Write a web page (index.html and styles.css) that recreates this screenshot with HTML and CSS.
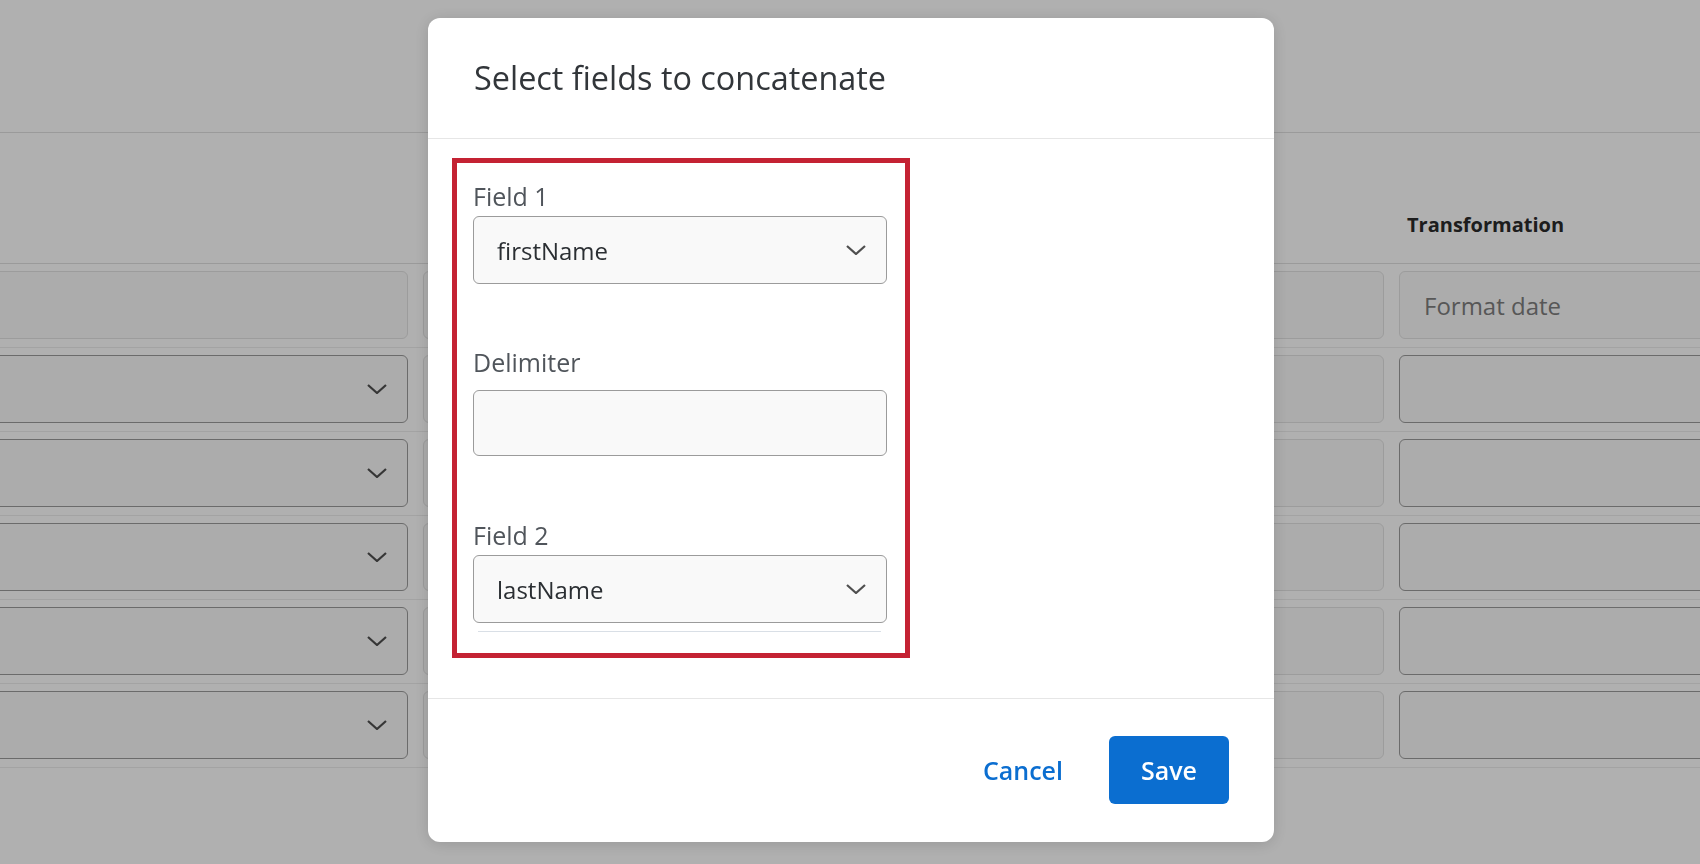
FILE: index.html
```html
<!DOCTYPE html>
<html lang="en">
<head>
    <meta charset="UTF-8">
    <meta name="viewport" content="width=device-width, initial-scale=1.0">
    <title>Select fields to concatenate</title>
    <link rel="stylesheet" href="styles.css">
</head>
<body>
    <div class="page">
        <div class="topbar"></div>

        <!-- mapping table behind the dialog -->
        <div class="table">
            <div class="row head-row">
                <div></div>
                <div></div>
                <div></div>
                <div class="col-title">Transformation</div>
            </div>
            <div class="row">
                <div class="box off"></div>
                <div class="box off"></div>
                <div class="box off"></div>
                <div class="box off"><span class="ph">Format date</span></div>
            </div>
            <div class="row">
                <div class="box pick"><svg class="chev" viewBox="0 0 20 10"><path d="M1 1 L10 9 L19 1"/></svg></div>
                <div class="box off"></div>
                <div class="box off"></div>
                <div class="box"></div>
            </div>
            <div class="row">
                <div class="box pick"><svg class="chev" viewBox="0 0 20 10"><path d="M1 1 L10 9 L19 1"/></svg></div>
                <div class="box off"></div>
                <div class="box off"></div>
                <div class="box"></div>
            </div>
            <div class="row">
                <div class="box pick"><svg class="chev" viewBox="0 0 20 10"><path d="M1 1 L10 9 L19 1"/></svg></div>
                <div class="box off"></div>
                <div class="box off"></div>
                <div class="box"></div>
            </div>
            <div class="row">
                <div class="box pick"><svg class="chev" viewBox="0 0 20 10"><path d="M1 1 L10 9 L19 1"/></svg></div>
                <div class="box off"></div>
                <div class="box off"></div>
                <div class="box"></div>
            </div>
            <div class="row">
                <div class="box pick"><svg class="chev" viewBox="0 0 20 10"><path d="M1 1 L10 9 L19 1"/></svg></div>
                <div class="box off"></div>
                <div class="box off"></div>
                <div class="box"></div>
            </div>
        </div>
    </div>

    <div class="overlay">
        <div class="modal">
            <div class="modal-head">
                <h2>Select fields to concatenate</h2>
            </div>
            <div class="modal-body">
                <div class="highlight">
                    <label class="lbl">Field 1</label>
                    <div class="select">
                        <span>firstName</span>
                        <svg class="chev" viewBox="0 0 20 10"><path d="M1 1 L10 9 L19 1"/></svg>
                    </div>

                    <label class="lbl lbl-gap">Delimiter</label>
                    <div class="text-input"></div>

                    <label class="lbl lbl-field2">Field 2</label>
                    <div class="select">
                        <span>lastName</span>
                        <svg class="chev" viewBox="0 0 20 10"><path d="M1 1 L10 9 L19 1"/></svg>
                    </div>
                    <div class="rule"></div>
                </div>
            </div>
            <div class="modal-foot">
                <button class="btn-link">Cancel</button>
                <button class="btn-primary">Save</button>
            </div>
        </div>
    </div>
</body>
</html>
```

FILE: styles.css
```css
/* page */
body {
    margin: 0;
    font-family: "Open Sans", "Noto Sans", sans-serif;
    background-color: #fff;
    color: #333;
    overflow: hidden;
}

.page {
    height: 864px;
    overflow: hidden;
}

.topbar {
    height: 132px;
    border-bottom: 1px solid #e0e0e0;
}

.table {
    margin: 0 -40px 0 -20px;
}

.row {
    display: grid;
    grid-template-columns: 428px 472px 474px 1fr;
    column-gap: 15px;
    padding: 7px 0 8px;
    border-bottom: 1px solid #ececec;
}

.head-row {
    height: 131px;
    box-sizing: border-box;
    padding: 0 0 24px;
    align-items: end;
    border-bottom-color: #e0e0e0;
}

.col-title {
    padding-left: 8px;
    font-size: 20px;
    line-height: 28px;
    font-weight: 700;
    color: #2a2a2a;
}

.box {
    height: 68px;
    box-sizing: border-box;
    border: 1px solid #9b9b9b;
    border-radius: 6px;
    background-color: #fafafa;
    display: flex;
    align-items: center;
    justify-content: flex-end;
    padding: 0 20px 0 24px;
}

.box.off {
    border-color: #e2e2e2;
    justify-content: flex-start;
}

.ph {
    font-size: 24px;
    color: #7e7e7e;
}

.chev {
    width: 20px;
    height: 10px;
    fill: none;
    stroke: #4f4f4f;
    stroke-width: 2.2;
    flex-shrink: 0;
}

/* dialog */
.overlay {
    position: fixed;
    top: 0;
    left: 0;
    right: 0;
    bottom: 0;
    background-color: rgba(0, 0, 0, 0.31);
    display: flex;
    justify-content: center;
    align-items: flex-start;
    padding: 18px 0 0 2px;
}

.modal {
    width: 846px;
    height: 824px;
    background-color: #fff;
    border-radius: 12px;
    box-shadow: 0 2px 16px rgba(0, 0, 0, 0.15);
    display: flex;
    flex-direction: column;
}

.modal-head {
    padding: 37px 46px 39px;
    border-bottom: 1px solid #e6e6e6;
}

.modal-head h2 {
    margin: 0;
    font-size: 32.4px;
    line-height: 44px;
    font-weight: 400;
    color: #32363a;
}

.modal-body {
    padding: 19px 24px 39px;
}

.highlight {
    width: 458px;
    box-sizing: border-box;
    border: 5px solid #c42233;
    padding: 16px 18px 21px 16px;
}

.lbl {
    display: block;
    font-size: 25px;
    line-height: 34px;
    color: #50555b;
    margin-bottom: 3px;
}

.lbl-gap {
    margin-top: 61px;
    margin-bottom: 11px;
}

.lbl-field2 {
    margin-top: 62px;
}

.select,
.text-input {
    height: 68px;
    box-sizing: border-box;
    border: 1px solid #9b9b9b;
    border-radius: 6px;
    background-color: #f9f9f9;
    display: flex;
    align-items: center;
    justify-content: space-between;
    padding: 0 20px 0 23px;
    font-size: 24px;
    color: #2b2f33;
}

.text-input {
    height: 66px;
}

.rule {
    height: 1px;
    margin: 8px 6px 0 5px;
    background-color: #d9dfe6;
}

.modal-foot {
    margin-top: auto;
    border-top: 1px solid #e6e6e6;
    height: 144px;
    box-sizing: border-box;
    display: flex;
    justify-content: flex-end;
    align-items: flex-start;
    padding: 37px 45px 0 0;
}

.modal-foot button {
    font-family: "Open Sans", "Noto Sans", sans-serif;
    font-size: 25px;
    font-weight: 600;
    height: 68px;
    border: none;
    border-radius: 6px;
    cursor: pointer;
}

.btn-link {
    background: none;
    color: #0b6ed0;
    padding: 0 24px;
    margin-right: 22px;
}

.btn-primary {
    background-color: #0b6ed0;
    color: #fff;
    width: 120px;
}
```
